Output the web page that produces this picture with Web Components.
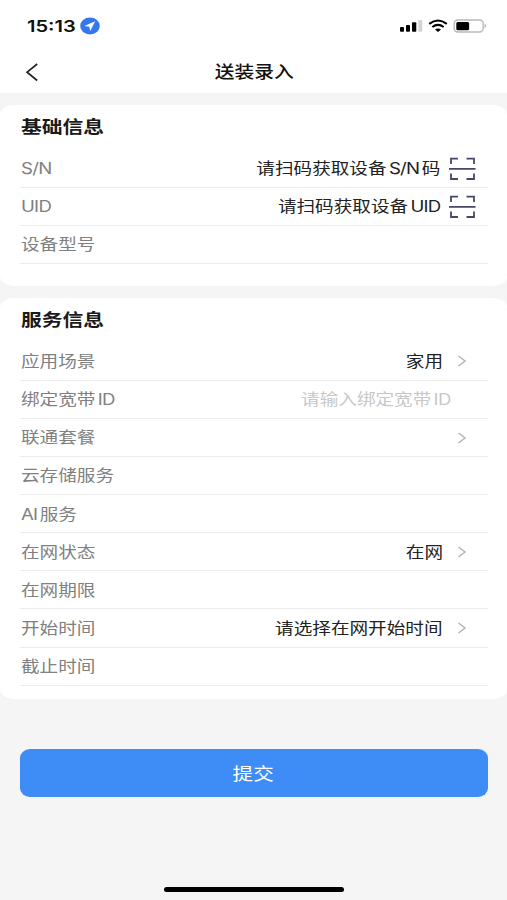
<!DOCTYPE html>
<html lang="zh-CN">
<head>
<meta charset="utf-8">
<title>送装录入</title>
<style>
html,body{margin:0;height:100%}
body{background:#f5f5f5;font-family:"Liberation Sans","Noto Sans CJK SC",sans-serif;color:#222;overflow:hidden}
</style>
</head>
<body>
<install-page></install-page>
<script>
const define=(name,html)=>{
  const t=document.createElement('template');
  t.innerHTML=html;
  customElements.define(name,class extends HTMLElement{
    constructor(){
      super();
      this.attachShadow({mode:'open'}).append(t.content.cloneNode(true));
    }
  });
};

/* Text widened horizontally around its aligned edge */
define('wide-text',`<style>
:host{display:block;white-space:nowrap;transform:scaleX(var(--wide,1.2));transform-origin:var(--edge,left) center;text-autospace:normal}
</style><slot></slot>`);

define('status-bar',`<style>
:host{display:flex;justify-content:space-between;align-items:center;height:52px;padding:0 20px 0 27px;box-sizing:border-box}
.left,.right{display:flex;align-items:center}
.time{width:53px;font:600 16.2px/20px Inter,sans-serif;color:#111;--wide:1.24}
svg{display:block}
</style>
<div class="left"><wide-text class="time">15:13</wide-text>
<svg width="20" height="18" viewBox="0 0 20 18"><ellipse cx="10" cy="9" rx="9.8" ry="8.4" fill="#3478f0"/><path d="M15.2 4.3 4.3 8.9l5 .8.9 4.4z" fill="#fff"/></svg></div>
<div class="right">
<svg width="88" height="16" viewBox="0 0 88 16">
<rect x="1" y="9" width="4" height="4.8" rx="1"/><rect x="7" y="7" width="4" height="6.8" rx="1"/><rect x="13" y="4.3" width="4.3" height="9.5" rx="1"/><rect x="19.3" y="2" width="4" height="11.8" rx="1" fill="#d5d5d5"/>
<g fill="none" stroke="#000" stroke-width="2.1"><path d="M30.2 5.8Q39-.8 47.8 5.8"/><path d="M33.3 9Q39 4.8 44.7 9"/></g><path d="M36 11.4q3-2 6 0L39 14z"/>
<rect x="55.2" y="2" width="29" height="12" rx="3.5" fill="#fff" stroke="#b9b9b9" stroke-width="1.4"/><rect x="57.3" y="4" width="12.8" height="8.2" rx="1.5"/><path d="M85.7 5.8q2.6 2.2 0 4.4z" fill="#aaa"/>
</svg></div>`);

define('nav-bar',`<style>
:host{display:grid;grid-template-columns:60px 1fr 60px;align-items:center;height:41px;font-size:16.6px;line-height:24px;font-weight:500;color:#111;padding:1px 0 0 1px;box-sizing:border-box;--edge:center;--wide:1.19}
svg{display:block;margin:-2px 0 0 24px}
wide-text{justify-self:center}
</style><svg width="14" height="20" viewBox="0 0 14 20"><path d="M12.2 2 2.1 10.2l10.1 8.3" fill="none" stroke="#222" stroke-width="1.7"/></svg>
<wide-text><slot></slot></wide-text>`);

define('info-card',`<style>
:host{display:block;background:#fff;border-radius:13px/10px;padding:0 19px 0 20px}
.head{height:44.5px;display:flex;align-items:center;font-size:17.3px;line-height:24px;font-weight:600;color:#1a1a1a;box-sizing:border-box;padding:.3px 0 0 .7px}
</style><div class="head"><wide-text><slot name="heading"></slot></wide-text></div><slot></slot>`);

define('info-row',`<style>
:host{display:flex;align-items:center;height:38.15px;box-sizing:border-box;border-bottom:1px solid #ebebeb;font-size:15.5px;line-height:22px;color:#808080;padding:2px 0 0 .6px}
.label{margin-right:auto}
.value{color:#222;--edge:right}
:host([hint]) .value{color:#c8c8c8;margin-right:37px}
svg{flex:none}
.scan{margin:-1px 12.5px 0 7px}
.go{margin:-1px 21px 0 14.3px}
.scan,.go{display:none}
:host([kind=scan]) .scan,:host([kind=go]) .go{display:block}
</style><wide-text class="label"><slot></slot></wide-text>
<wide-text class="value"><slot name="value"></slot></wide-text>
<svg class="scan" width="28" height="24" viewBox="0 0 28 24" fill="none" stroke="#46466a" stroke-width="1.8"><path d="M3 7V1.7h7M18.5 1.7H26V7M3 16.5V22h7M18.5 22H26V16.5M1 11.9H27.5"/></svg>
<svg class="go" width="10" height="14" viewBox="0 0 10 14" fill="none" stroke="#b0b0b0" stroke-width="1.3"><path d="m1.5 2 6.6 5-6.6 5"/></svg>`);

define('submit-button',`<style>
:host{display:block;padding:0 19px 0 20px}
button{display:flex;width:100%;height:48px;align-items:center;justify-content:center;border:0;border-radius:10px/9px;background:#3e8cf5;color:#fff;font:400 17.2px/24px "Noto Sans CJK SC",sans-serif;--edge:center;padding:0 1px 1px 0}
</style><button><wide-text><slot></slot></wide-text></button>`);

define('install-page',`<style>
:host{display:flex;flex-direction:column;height:900px;width:507px}
header{background:#fff;height:93px}
info-card.base{margin-top:12px;padding-bottom:22px}
info-card.service{margin-top:12px;padding-bottom:13px}
submit-button{margin-top:50.4px}
.latin{font-family:Inter,sans-serif;letter-spacing:-.6px}
.home{width:180px;height:5px;border-radius:3px;background:#000;margin:auto auto 8px 164px}
</style>
<header><status-bar></status-bar><nav-bar>送装录入</nav-bar></header>
<info-card class="base"><span slot="heading">基础信息</span>
<info-row kind="scan"><span class="latin">S/N</span><span slot="value">请扫码获取设备<span class="latin">S/N</span>码</span></info-row>
<info-row kind="scan"><span class="latin">UID</span><span slot="value">请扫码获取设备<span class="latin">UID</span></span></info-row>
<info-row>设备型号</info-row></info-card>
<info-card class="service"><span slot="heading">服务信息</span>
<info-row kind="go">应用场景<span slot="value">家用</span></info-row>
<info-row hint>绑定宽带<span class="latin">ID</span><span slot="value">请输入绑定宽带<span class="latin">ID</span></span></info-row>
<info-row kind="go">联通套餐</info-row>
<info-row>云存储服务</info-row>
<info-row><span class="latin">AI</span>服务</info-row>
<info-row kind="go">在网状态<span slot="value">在网</span></info-row>
<info-row>在网期限</info-row>
<info-row kind="go">开始时间<span slot="value">请选择在网开始时间</span></info-row>
<info-row>截止时间</info-row></info-card>
<submit-button>提交</submit-button>
<div class="home"></div>`);
</script>
</body>
</html>
